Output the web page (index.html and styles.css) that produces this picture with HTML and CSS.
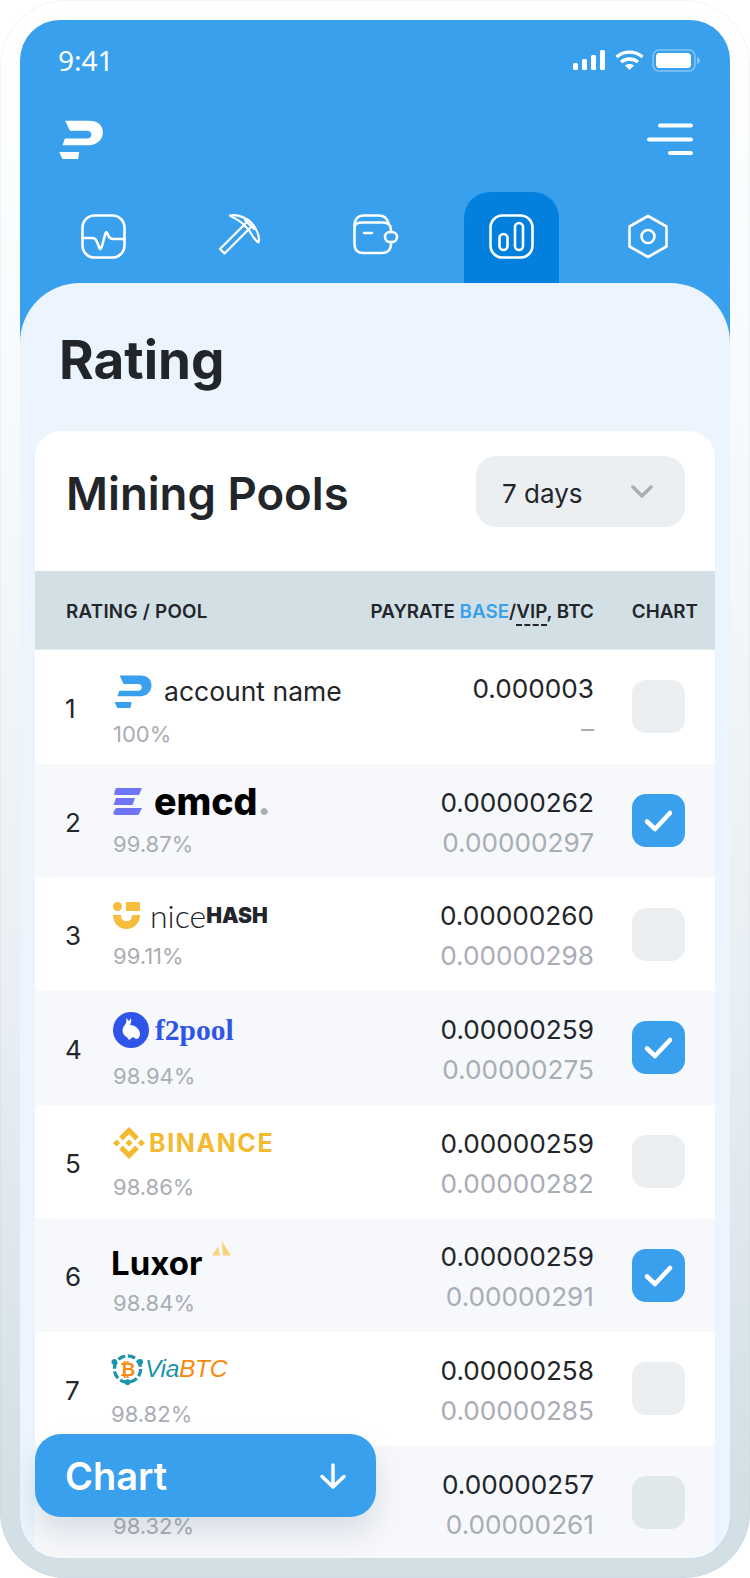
FILE: index.html
```html
<!DOCTYPE html>
<html lang="en">
<head>
<meta charset="utf-8">
<title>Rating</title>
<link rel="stylesheet" href="styles.css">
</head>
<body>
<svg class="defs" width="0" height="0" aria-hidden="true">
  <symbol id="brand" viewBox="0 0 130 116">
    <path d="M18 2H90C118 2 130 18 130 36C130 60 112 75 88 75H10L17 55H82C92 55 96 50 96 43C96 36 90 32 82 32H32Z"/>
    <path d="M0 95H60L56 116H10Z"/>
  </symbol>
  <symbol id="check" viewBox="0 0 53 53">
    <path d="M15 27.500L23 35L38 19" fill="none" stroke="#fff" stroke-width="4.500" stroke-linecap="round" stroke-linejoin="round"/>
  </symbol>
</svg>
<div class="frame">
  <div class="screen">
    <header class="head">
      <div class="status">
        <span class="time">9:41</span>
        <svg class="status-icons" width="127" height="23" viewBox="0 0 127 23">
          <g fill="#fff">
            <rect x="0" y="14" width="5" height="7" rx="1.500"/>
            <rect x="9" y="10" width="5" height="11" rx="1.500"/>
            <rect x="18" y="6" width="5" height="15" rx="1.500"/>
            <rect x="27" y="1" width="5" height="20" rx="1.500"/>
            <path d="M56.500 21L52 16.500C54.500 14.500 58.500 14.500 61 16.500Z"/>
            <rect x="83" y="4" width="35" height="15" rx="3.500"/>
          </g>
          <g fill="none" stroke="#fff" stroke-width="3.400">
            <path d="M43.500 8C51 1.500 62 1.500 69.500 8"/>
            <path d="M48 13C53 9 60 9 65 13"/>
          </g>
          <rect x="80" y="1" width="42" height="21" rx="6" fill="none" stroke="#fff" stroke-opacity=".4" stroke-width="1.500"/>
          <path d="M124 8V15C125.500 14.500 127 13 127 11.500C127 10 125.500 8.500 124 8Z" fill="#fff" fill-opacity=".4"/>
        </svg>
      </div>
      <div class="topbar">
        <svg class="brand-white" width="44" height="39"><use href="#brand"/></svg>
        <svg class="menu" width="46" height="33" viewBox="0 0 46 33">
          <g stroke="#fff" stroke-width="4" stroke-linecap="round">
            <path d="M13 2.500H44"/><path d="M2 16.500H44"/><path d="M23 30H44"/>
          </g>
        </svg>
      </div>
      <nav class="tabs">
        <a class="tab"><svg width="45" height="45" viewBox="0 0 45 45" class="ico"><rect x="1.500" y="1.500" width="42" height="42" rx="12"/><path d="M1.500 24H11C14 24 15 25 16 28L18 33C19 36 20 35 21 32L24 21C25 17 26 18 27 21C28 24 30 25 33 25H43.500"/></svg></a>
        <a class="tab"><svg width="41" height="41" viewBox="0 0 41 41" class="ico ico-thin"><path d="M1 35L5.500 39.500L32.500 12.500L28 8Z"/><path d="M11 1.500C19 0 28 4 33 9.500C38 15 41 23 39.500 28.500C35 26 33 21 30 16L24 10C20 6 15 4 11 1.500Z"/><path d="M26 6L35 15"/></svg></a>
        <a class="tab"><svg width="46" height="41" viewBox="0 0 46 41" class="ico"><path d="M1.500 12C1.500 5 5 1.500 11 1.500H26C31 1.500 34 4 35.500 9"/><path d="M38 18V16C38 11 35 8.500 30 8.500H9C5 8.500 1.500 10 1.500 14V30C1.500 36 5 39 10 39H29C34 39 38 36 38 30V28"/><rect x="32" y="18" width="12" height="10" rx="5"/><path d="M11 19H19"/></svg></a>
        <a class="tab tab-on"><svg width="45" height="45" viewBox="0 0 45 45" class="ico"><rect x="1.500" y="1.500" width="42" height="42" rx="12"/><rect x="10.500" y="20" width="8" height="16" rx="4"/><rect x="26" y="9" width="8" height="27" rx="4"/></svg></a>
        <a class="tab"><svg width="42" height="45" viewBox="0 0 42 45" class="ico"><path d="M21 2L39.500 12.500V32.500L21 43L2.500 32.500V12.500Z"/><circle cx="21" cy="22.500" r="6.500"/></svg></a>
      </nav>
    </header>
    <main class="content">
      <h1 class="title">Rating</h1>
      <section class="card">
        <div class="card-head">
          <h2 class="card-title">Mining Pools</h2>
          <div class="select">
            <span class="select-text">7 days</span>
            <svg width="22" height="14" viewBox="0 0 22 14"><path d="M2 2L11 11L20 2" fill="none" stroke="#a9adb5" stroke-width="3.500" stroke-linecap="round" stroke-linejoin="round"/></svg>
          </div>
        </div>
        <div class="thead">
          <span class="th-pool">RATING / POOL</span>
          <span class="th-pay">PAYRATE <b class="base">BASE</b>/<span class="vip">VIP</span>, BTC</span>
          <span class="th-chart">CHART</span>
        </div>

        <div class="row">
          <span class="rank">1</span>
          <div class="pool">
            <div class="logo logo-acc"><svg class="brand-blue" width="38" height="33"><use href="#brand"/></svg><span>account name</span></div>
            <div class="pct">100%</div>
          </div>
          <div class="vals"><div class="v1">0.000003</div><div class="v2">–</div></div>
          <div class="box"></div>
        </div>

        <div class="row alt">
          <span class="rank">2</span>
          <div class="pool">
            <div class="logo logo-emcd">
              <svg width="29" height="27" viewBox="0 0 29 27" fill="#6f75f6"><path d="M4 0H29L26 7H1.500C1 5 2 0 4 0Z"/><path d="M3 10H22L19.500 17H0.500Z"/><path d="M3 20H29L26.500 25C26 26.500 25 27 24 27H3C1 27 0 26 0.500 24Z"/></svg>
              <span>emcd<i>.</i></span>
            </div>
            <div class="pct">99.87%</div>
          </div>
          <div class="vals"><div class="v1">0.00000262</div><div class="v2">0.00000297</div></div>
          <div class="box on"><svg width="53" height="53"><use href="#check"/></svg></div>
        </div>

        <div class="row">
          <span class="rank">3</span>
          <div class="pool">
            <div class="logo logo-nice">
              <svg width="27" height="27" viewBox="0 0 27 27" fill="#f6bc3c"><circle cx="4.500" cy="4.500" r="4.500"/><rect x="13" y="0" width="14" height="9" rx="1"/><path d="M0 13H8C8 17 10 19 13.500 19C17 19 19 17 19 13H27C27 21 21 27 13.500 27C6 27 0 21 0 13Z"/></svg>
              <span class="nice">nice</span><span class="hash">HASH</span>
            </div>
            <div class="pct">99.11%</div>
          </div>
          <div class="vals"><div class="v1">0.00000260</div><div class="v2">0.00000298</div></div>
          <div class="box"></div>
        </div>

        <div class="row alt">
          <span class="rank">4</span>
          <div class="pool">
            <div class="logo logo-f2">
              <svg width="36" height="36" viewBox="0 0 36 36"><circle cx="18" cy="18" r="18" fill="#2f55e8"/><path d="M13 6L16 9L18 6C18.500 9 18 11 17 13C22 13 27 17 27 22C27 25 25 27 23 27L20 25L16 28C15 26 14 25 12 24C9 21 9 17 11 14C13 12 14 9 13 6Z" fill="#fff"/></svg>
              <span>f2pool</span>
            </div>
            <div class="pct">98.94%</div>
          </div>
          <div class="vals"><div class="v1">0.00000259</div><div class="v2">0.00000275</div></div>
          <div class="box on"><svg width="53" height="53"><use href="#check"/></svg></div>
        </div>

        <div class="row">
          <span class="rank">5</span>
          <div class="pool">
            <div class="logo logo-bin">
              <svg width="32" height="32" viewBox="0 0 32 32" fill="#f3ba2f"><path d="M9.800 13.400L16 7.200l6.200 6.200 3.600-3.600L16 0 6.200 9.800zM0 16l3.600-3.600L7.200 16l-3.600 3.600zM9.800 18.600L16 24.800l6.200-6.200 3.600 3.600L16 32l-9.800-9.800zM24.800 16l3.600-3.600L32 16l-3.600 3.600zM19.600 16L16 12.400 12.400 16 16 19.600z"/></svg>
              <span>BINANCE</span>
            </div>
            <div class="pct">98.86%</div>
          </div>
          <div class="vals"><div class="v1">0.00000259</div><div class="v2">0.00000282</div></div>
          <div class="box"></div>
        </div>

        <div class="row alt">
          <span class="rank">6</span>
          <div class="pool">
            <div class="logo logo-lux">
              <span>Luxor</span>
              <svg class="lux-mark" width="20" height="17" viewBox="0 0 20 16" fill="#fbd27c"><path d="M0 15L6 6L8 15Z"/><path d="M9.500 0L19 15H11Z"/></svg>
            </div>
            <div class="pct">98.84%</div>
          </div>
          <div class="vals"><div class="v1">0.00000259</div><div class="v2">0.00000291</div></div>
          <div class="box on"><svg width="53" height="53"><use href="#check"/></svg></div>
        </div>

        <div class="row">
          <span class="rank">7</span>
          <div class="pool pool-via">
            <div class="logo logo-via">
              <svg width="33" height="34" viewBox="0 0 35 35"><circle cx="17.500" cy="17.500" r="14" fill="none" stroke="#1a93ad" stroke-width="3.500" stroke-dasharray="8 3"/><circle cx="3.500" cy="10" r="3" fill="#1a93ad"/><circle cx="17.500" cy="31.500" r="3" fill="#1a93ad"/><circle cx="31" cy="10" r="3" fill="#1a93ad"/><text x="17.500" y="25" text-anchor="middle" class="via-b">₿</text></svg>
              <span><em class="via">Via</em><em class="btc">BTC</em></span>
            </div>
            <div class="pct">98.82%</div>
          </div>
          <div class="vals"><div class="v1">0.00000258</div><div class="v2">0.00000285</div></div>
          <div class="box"></div>
        </div>

        <div class="row alt">
          <span class="rank"></span>
          <div class="pool">
            <div class="logo logo-last"></div>
            <div class="pct">98.32%</div>
          </div>
          <div class="vals"><div class="v1">0.00000257</div><div class="v2">0.00000261</div></div>
          <div class="box dim"></div>
        </div>
      </section>
    </main>
    <button class="fab">
      <span>Chart</span>
      <svg width="28" height="28" viewBox="0 0 28 28"><path d="M14 3V25M3 14.500L14 25L25 14.500" fill="none" stroke="#fff" stroke-width="3.500" stroke-linecap="round" stroke-linejoin="round"/></svg>
    </button>
  </div>
</div>
</body>
</html>
```
FILE: styles.css
```css
* { box-sizing: border-box; }
html, body { margin: 0; padding: 0; background: #fff; }
body { width: 750px; height: 1578px; overflow: hidden; font-family: Inter, "Liberation Sans", sans-serif; color: #22252a; }
.defs { position: absolute; }

.frame {
  width: 750px; height: 1578px; padding: 20px;
  border-radius: 66px;
  background: linear-gradient(180deg, #fff 0%, #f6f9fc 30%, #e8eef3 65%, #d2dfe5 95%);
  box-shadow: inset 0 0 0 1px rgba(190, 200, 208, .18);
}
.screen {
  position: relative;
  width: 710px; height: 1538px;
  border-radius: 40px;
  overflow: hidden;
  background: #38a0ec;
}

.head { height: 263px; display: flex; flex-direction: column; }
.status { display: flex; justify-content: space-between; align-items: center; padding: 25px 30px 0 38px; height: 55px; }
.time { font-family: "Noto Sans", sans-serif; font-size: 28px; color: #fff; line-height: 30px; }
.status-icons { display: block; }
.topbar { display: flex; justify-content: space-between; align-items: center; padding: 0 37px 0 39px; height: 39px; margin-top: 45px; }
.brand-white { fill: #fff; display: block; }
.brand-blue { fill: #38a0ec; display: block; }
.menu { display: block; }

.tabs { display: flex; gap: 41.100px; padding: 0 0 0 36px; margin-top: 33px; flex: 1; }
.tab { width: 95px; display: flex; justify-content: center; align-items: flex-start; padding-top: 22px; border-radius: 26px 26px 0 0; }
.tab-on { background: #0380dd; }
.ico { fill: none; stroke: #fff; stroke-width: 2.600; stroke-linecap: round; stroke-linejoin: round; display: block; }
.ico-thin { stroke-width: 2.200; }

.content { background: #ecf5fd; border-radius: 60px 60px 0 0; padding: 0 15px; height: 1275px; }
.title { margin: 0; padding: 45px 0 0 24px; font-size: 53px; line-height: 64px; font-weight: 700; height: 148px; color: #22252a; }

.card { background: #fff; border-radius: 26px 26px 0 0; overflow: hidden; }
.card-head { display: flex; justify-content: space-between; align-items: flex-start; height: 140px; padding: 25px 30px 0 31px; }
.card-title { margin: 11px 0 0; font-size: 45.500px; line-height: 54px; font-weight: 600; color: #22252a; }
.select { width: 209px; height: 71px; border-radius: 20px; background: #ebeff2; display: flex; justify-content: space-between; align-items: center; padding: 0 32px 0 26px; font-size: 26px; }
.select-text { padding-top: 3px; }

.thead { height: 79px; background: #d2dfe5; border-bottom: 1px solid #e2eaee; display: flex; align-items: center; padding: 2px 17px 0 31px; font-size: 18.800px; font-weight: 600; color: #22252a; }
.th-pool { flex: 1; letter-spacing: .25px; }
.th-chart { margin-left: 38px; }
.base { color: #38a0ec; font-weight: 600; }
.vip { border-bottom: 2px dashed #22252a; padding-bottom: 1px; }

.row { height: 113.700px; display: flex; align-items: center; padding: 0 30px; background: #fff; }
.alt { background: #f7f8fb; }
.rank { width: 48px; font-size: 26px; line-height: 32px; padding-top: 4px; box-sizing: content-box; }
.pool { width: 250px; align-self: flex-start; padding-top: 20px; display: flex; flex-direction: column; }
.pool-via { margin-left: -2px; margin-right: 2px; }
.logo { height: 36px; display: flex; align-items: center; margin-bottom: 10px; }
.pct { font-size: 22px; line-height: 28px; color: #a9adb5; }
.vals { flex: 1; text-align: right; margin-right: 38px; padding-top: 4px; font-size: 26.200px; line-height: 32px; }
.v1 { color: #22252a; }
.v2 { color: #a9adb5; margin-top: 8px; }
.box { width: 53px; height: 53px; border-radius: 14px; background: #ebeff2; flex: none; }
.box svg { display: block; }
.on { background: #38a0ec; }
.dim { background: #e1e8ec; }

.logo-acc { gap: 12px; font-size: 26.500px; color: #22252a; margin-top: 3px; margin-bottom: 11px; margin-left: 1px; }
.logo-emcd { gap: 12px; font-size: 37.500px; font-weight: 800; color: #000; }
.logo-emcd i { color: #a9adb5; font-style: normal; }
.logo-nice { font-size: 32px; color: #22252a; margin-bottom: 9px; }
.nice { font-family: Lato, sans-serif; font-weight: 300; margin-left: 10px; }
.hash { font-family: Inter, sans-serif; font-weight: 900; font-size: 21px; }
.logo-f2 { gap: 6px; font-family: "Liberation Serif", serif; font-weight: 700; font-size: 29.500px; color: #2f55e8; margin-top: 1px; margin-bottom: 14px; }
.logo-bin { gap: 4px; font-size: 25px; font-weight: 700; letter-spacing: 1.600px; color: #f3ba2f; margin-bottom: 12px; }
.logo-lux { font-size: 33px; font-weight: 700; color: #000; margin-top: 7px; margin-bottom: 8px; margin-left: -2px; }
.lux-mark { margin: -30px 0 0 10px; }
.logo-via { font-family: "Liberation Sans", sans-serif; font-size: 24.500px; margin-top: -1px; margin-bottom: 13px; gap: 1px; letter-spacing: -.3px; }
.logo-via em { font-style: italic; font-weight: 400; }
.via { color: #1a93ad; }
.btc { color: #f78a0e; }
.via-b { font-family: "DejaVu Sans", sans-serif; font-size: 20px; font-weight: 700; fill: #f78a0e; }

.fab {
  position: absolute; left: 15px; top: 1414px;
  width: 341px; height: 83px;
  display: flex; justify-content: space-between; align-items: center;
  padding: 0 29px 0 30px;
  border: 0; border-radius: 26px;
  background: #38a0ec; color: #fff;
  font-family: Inter, sans-serif; font-size: 38px; font-weight: 600;
  box-shadow: 0 16px 30px rgba(60, 90, 120, .16);
}
.fab svg { display: block; }
```
